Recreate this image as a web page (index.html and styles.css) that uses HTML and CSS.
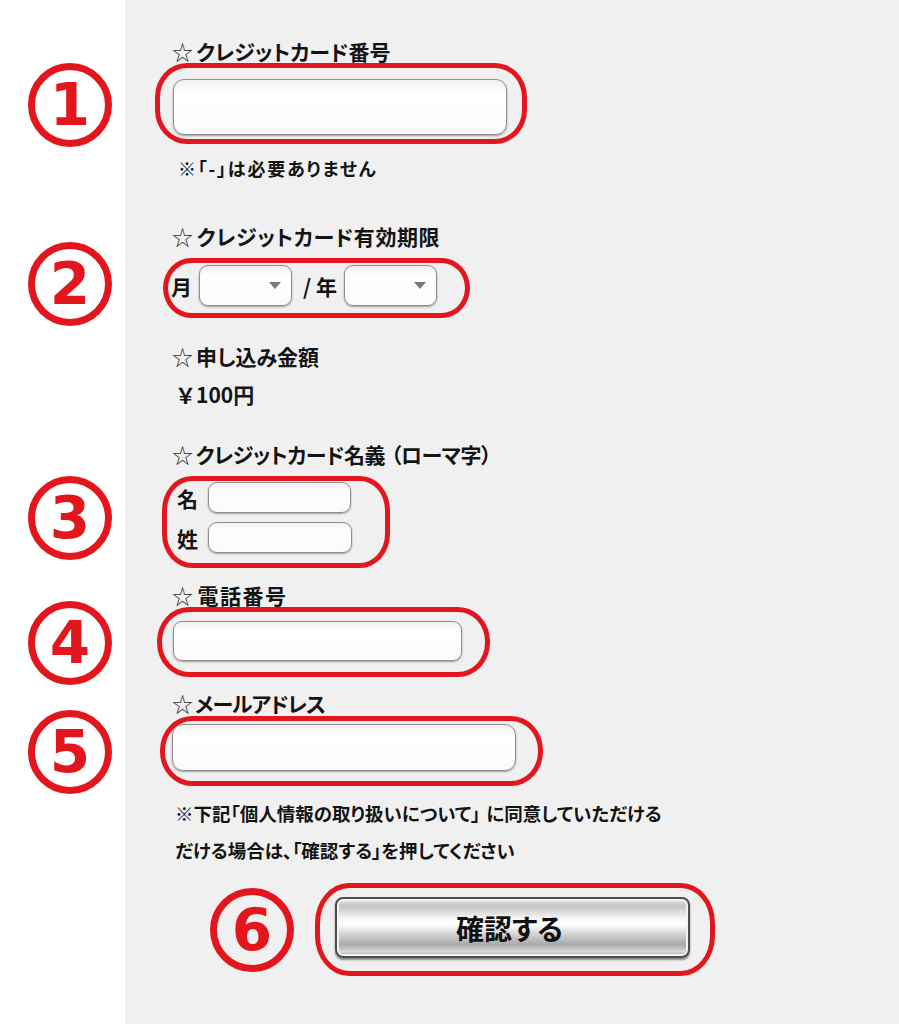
FILE: index.html
```html
<!DOCTYPE html>
<html lang="ja">
<head>
<meta charset="utf-8">
<title>クレジットカード決済</title>
<link rel="stylesheet" href="styles.css">
</head>
<body>
<main class="page">
  <p class="label l1"><span class="star">☆</span>クレジットカード番号</p>
  <div class="marker"><span class="num">1</span></div>
  <div class="ring r1"><input class="field f1" type="text"></div>
  <p class="note n1">※「-」は必要ありません</p>

  <p class="label l2"><span class="star">☆</span>クレジットカード有効期限</p>
  <div class="marker"><span class="num">2</span></div>
  <div class="ring r2">
    <span class="unit">月</span>
    <div class="select"><span class="caret"></span></div>
    <span class="unit slash">/ 年</span>
    <div class="select"><span class="caret"></span></div>
  </div>

  <p class="label l3"><span class="star">☆</span>申し込み金額</p>
  <p class="label price">￥100円</p>

  <p class="label l4"><span class="star">☆</span>クレジットカード名義<span class="paren">（ローマ字）</span></p>
  <div class="marker"><span class="num">3</span></div>
  <div class="ring r3">
    <div class="name-row"><span class="unit">名</span><input class="field f3" type="text"></div>
    <div class="name-row"><span class="unit">姓</span><input class="field f3b" type="text"></div>
  </div>

  <p class="label l5"><span class="star">☆</span>電話番号</p>
  <div class="marker"><span class="num">4</span></div>
  <div class="ring r4"><input class="field f4" type="text"></div>

  <p class="label l6"><span class="star">☆</span>メールアドレス</p>
  <div class="marker"><span class="num">5</span></div>
  <div class="ring r5"><input class="field f5" type="text"></div>

  <p class="note n2">※下記「個人情報の取り扱いについて」<span class="gap"></span>に同意していただける<br>だける場合は、「確認する」を押してください</p>

  <div class="submit-row">
    <span class="num n6">6</span>
    <div class="ring r6"><button class="confirm" type="button">確認する</button></div>
  </div>
</main>
</body>
</html>
```
FILE: styles.css
```css
html {
  background: linear-gradient(to right, #ffffff 0, #ffffff 125px, #f0f0f0 125px, #f0f0f0 100%);
  min-height: 100%;
}
body {
  margin: 0;
  min-height: 1024px;
  font-family: "Noto Sans CJK JP", sans-serif;
  color: #141414;
  font-feature-settings: "palt";
}
.page {
  display: grid;
  grid-template-columns: 125px 1fr;
  align-items: start;
}
.label, .note, .ring, .submit-row {
  grid-column: 2;
}
p { margin: 0; }

.label {
  font-size: 21px;
  font-weight: 700;
  line-height: 28px;
  padding-left: 47px;
}
.star {
  font-weight: 400;
  color: #333;
  margin-right: 3px;
}
.note {
  font-size: 18.5px;
  font-weight: 700;
  line-height: 24px;
}

.l1 { margin-top: 37px; }
.n1 { margin-top: 12px; padding-left: 53px; font-size: 18px; letter-spacing: 1.8px; }
.l2 { margin-top: 42px; letter-spacing: 0.6px; }
.l3 { margin-top: 24px; }
.price { margin-top: 10px; padding-left: 50px; font-feature-settings: normal; }
.l4 { margin-top: 32px; letter-spacing: -0.5px; }
.paren { margin-left: 6px; }
.l5 { margin-top: 13px; letter-spacing: 1.5px; }
.l6 { margin-top: 12px; letter-spacing: -1px; }
.n2 { margin-top: 9px; padding-left: 50px; line-height: 37px; }
.gap { display: inline-block; width: 6px; }

/* circled numbers */
.marker {
  grid-column: 1;
  align-self: center;
  display: flex;
  padding-left: 28px;
}
.num {
  box-sizing: border-box;
  width: 84px;
  height: 84px;
  margin: -20px 0;
  border: 7px solid #e3161e;
  border-radius: 50%;
  display: flex;
  align-items: center;
  justify-content: center;
  color: #e3161e;
  font: 700 58px/1 "DejaVu Sans", sans-serif;
}

/* red annotation rings */
.ring {
  box-sizing: border-box;
  border: 5px solid #e3161e;
  border-radius: 32px / 34px;
  justify-self: start;
}
.r1 { margin-top: -2px; margin-left: 30px; width: 372px; padding: 11px 15px 4px 13px; }
.r2 {
  margin-top: 8px; margin-left: 38px; width: 307px; height: 60px;
  padding: 2px 0 7px 3px;
  display: flex; align-items: center;
}
.r3 { margin-top: 8px; margin-left: 37px; width: 228px; padding: 1px 0 10px 10px; border-radius: 30px / 34px; }
.r4 { margin-top: -2px; margin-left: 32px; width: 333px; padding: 9px 0 11px 11px; }
.r5 { margin-top: -1px; margin-left: 35px; width: 383px; padding: 3px 0 10px 7px; }

/* inputs */
.field {
  box-sizing: border-box;
  display: block;
  margin: 0;
  border: 1px solid #8e8e8e;
  border-radius: 9px;
  background: linear-gradient(#f1f1f1, #ffffff 25%, #fbfbfb);
  box-shadow: 0 1px 2px rgba(0, 0, 0, 0.35);
  font: 16px "Noto Sans CJK JP", sans-serif;
}
.f1 { width: 334px; height: 56px; border-radius: 11px; }
.f3 { width: 143px; height: 31px; }
.f3b { width: 144px; height: 31px; }
.f4 { width: 289px; height: 40px; }
.f5 { width: 344px; height: 47px; border-radius: 11px; }

.unit {
  font-size: 21px;
  font-weight: 700;
  line-height: 28px;
}
.select {
  box-sizing: border-box;
  width: 93px;
  height: 41px;
  margin-left: 7px;
  border: 1px solid #8e8e8e;
  border-radius: 9px;
  background: linear-gradient(#f1f1f1, #ffffff 25%, #fbfbfb);
  box-shadow: 0 1px 2px rgba(0, 0, 0, 0.35);
  display: flex;
  align-items: center;
  justify-content: flex-end;
  padding-right: 10px;
}
.slash { margin-left: 11px; }
.caret {
  width: 0;
  height: 0;
  border-left: 6px solid transparent;
  border-right: 6px solid transparent;
  border-top: 7px solid #7a7a7a;
}
.name-row {
  display: flex;
  align-items: center;
  gap: 10px;
}
.name-row + .name-row { margin-top: 9px; }

/* submit */
.submit-row {
  margin-top: 14px;
  padding-left: 85px;
  display: flex;
  align-items: center;
  gap: 21px;
}
.n6 { margin: 0; }
.r6 {
  width: 400px;
  height: 93px;
  padding: 9px 0 0 15px;
  border-radius: 34px / 40px;
}
.confirm {
  box-sizing: border-box;
  width: 355px;
  height: 61px;
  border: 2px solid #4d4d4d;
  border-radius: 8px;
  background: linear-gradient(to bottom, #e6e6e6 0%, #c4c4c4 12%, #f7f7f7 35%, #ffffff 45%, #d2d2d2 62%, #a9a9a9 80%, #dcdcdc 93%, #8d8d8d 100%);
  box-shadow: inset 0 0 0 2px #f2f2f2, 0 2px 2px rgba(0, 0, 0, 0.45);
  font: 700 28px/1 "Noto Sans CJK JP", sans-serif;
  font-feature-settings: "palt";
  color: #111;
  padding: 0;
  text-indent: -6px;
}
```
